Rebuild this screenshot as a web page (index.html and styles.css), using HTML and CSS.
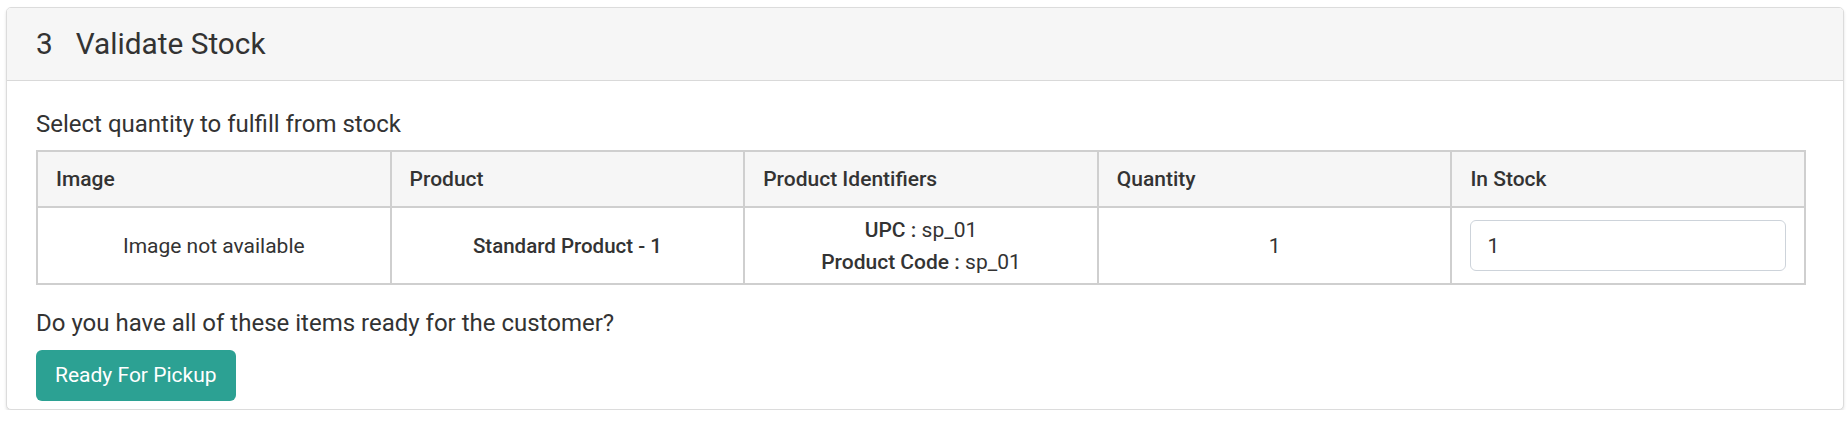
FILE: index.html
```html
<!DOCTYPE html>
<html lang="en">
<head>
<meta charset="utf-8">
<title>Validate Stock</title>
<link rel="stylesheet" href="styles.css">
</head>
<body>
<section class="card">
  <header class="card-header">
    <h2 class="step-title"><span class="step-num">3</span>Validate Stock</h2>
  </header>
  <div class="card-body">
    <p class="lead">Select quantity to fulfill from stock</p>
    <table class="stock-table">
      <thead>
        <tr>
          <th>Image</th>
          <th>Product</th>
          <th>Product Identifiers</th>
          <th>Quantity</th>
          <th>In Stock</th>
        </tr>
      </thead>
      <tbody>
        <tr>
          <td>Image not available</td>
          <td class="strong">Standard Product - 1</td>
          <td>
            <div><b>UPC :</b> sp_01</div>
            <div><b>Product Code :</b> sp_01</div>
          </td>
          <td>1</td>
          <td class="input-cell"><input class="qty-input" type="text" value="1"></td>
        </tr>
      </tbody>
    </table>
    <p class="question">Do you have all of these items ready for the customer?</p>
    <button class="btn-ready" type="button">Ready For Pickup</button>
  </div>
</section>
</body>
</html>
```
FILE: styles.css
```css
* { box-sizing: border-box; }

html, body {
  margin: 0;
  padding: 0;
  background: #ffffff;
}

body {
  font-family: Roboto, "Liberation Sans", Arial, sans-serif;
  font-size: 21px;
  line-height: 32px;
  color: #333333;
  padding: 7px 3px 0 6px;
}

.card {
  border: 1px solid #dcdcdc;
  border-radius: 5px;
  background: #ffffff;
  box-shadow: 0 2px 3px rgba(0, 0, 0, 0.12);
  overflow: hidden;
}

.card-header {
  background: #f6f6f6;
  border-bottom: 1px solid #d9d9d9;
  height: 73px;
  display: flex;
  align-items: center;
  padding: 0 29px;
}

.step-title {
  margin: 0;
  font-size: 29.8px;
  font-weight: 400;
  line-height: 36px;
  color: #333333;
}

.step-num {
  margin-right: 23px;
}

.card-body {
  padding: 27px 37px 8px 29px;
}

.lead {
  margin: 0 0 10px 0;
  font-size: 24px;
}

.stock-table {
  width: 100%;
  border-collapse: collapse;
  table-layout: fixed;
  border: 2px solid #cfcfcf;
}

.stock-table th,
.stock-table td {
  border: 2px solid #cfcfcf;
}

.stock-table th {
  background: #f6f6f6;
  text-align: left;
  font-weight: 500;
  height: 56px;
  padding: 0 18px;
  vertical-align: middle;
}

.stock-table td {
  text-align: center;
  vertical-align: middle;
  height: 77px;
  padding: 0 18px;
}

.stock-table td.strong {
  font-weight: 500;
  font-size: 20.5px;
}

.stock-table b {
  font-weight: 500;
}

.qty-input {
  display: block;
  width: 100%;
  height: 51px;
  border: 1px solid #cdd3da;
  border-radius: 6px;
  padding: 0 16px;
  font-family: inherit;
  font-size: 21px;
  color: #333333;
  text-align: left;
  background: #ffffff;
}

.question {
  margin: 22px 0 11px 0;
  font-size: 24px;
}

.btn-ready {
  display: inline-block;
  height: 51px;
  padding: 0 19px;
  border: none;
  border-radius: 6px;
  background: #2ca193;
  color: #ffffff;
  font-family: inherit;
  font-size: 21px;
  line-height: 51px;
  cursor: pointer;
}
```
